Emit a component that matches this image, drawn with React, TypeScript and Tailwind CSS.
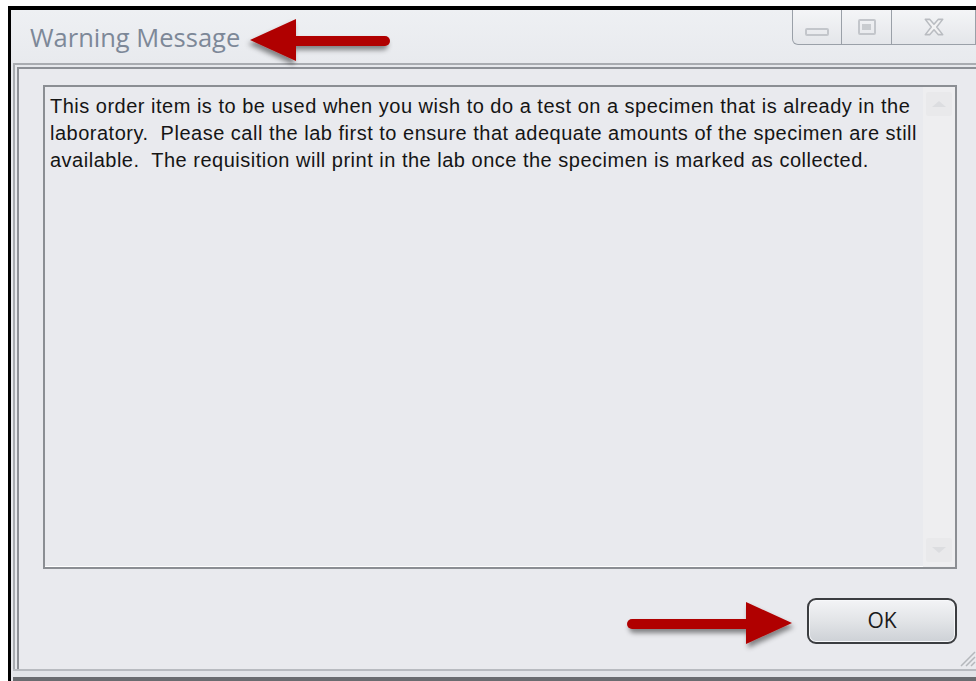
import React from "react";

const LINES = [
  "This order item is to be used when you wish to do a test on a specimen that is already in the",
  "laboratory.\u00a0 Please call the lab first to ensure that adequate amounts of the specimen are still",
  "available.\u00a0 The requisition will print in the lab once the specimen is marked as collected.",
];

function CalloutArrow({ dir, length }: { dir: "left" | "right"; length: number }) {
  // drawn pointing right, mirrored for the left one
  const w = length + 12;
  return (
    <svg width={w} height="60" viewBox={`0 0 ${w} 60`} className="overflow-visible">
      <defs>
        <filter id={`sh-${dir}`} x="-20%" y="-40%" width="140%" height="180%">
          <feDropShadow dx="2" dy="4" stdDeviation="2.5" floodColor="#000" floodOpacity="0.45" />
        </filter>
      </defs>
      <g filter={`url(#sh-${dir})`} transform={dir === "left" ? `translate(${w} 0) scale(-1 1)` : undefined}>
        <line x1="6" y1="32" x2={length - 40} y2="32" stroke="#b00000" strokeWidth="10" strokeLinecap="round" />
        <polygon points={`${length - 46},10 ${length},31 ${length - 46},52`} fill="#b00000" />
      </g>
    </svg>
  );
}

function CaptionButton({ kind, className }: { kind: "min" | "max" | "close"; className: string }) {
  return (
    <div
      className={`flex items-center justify-center h-[35px] border border-t-0 border-[#9aa0a8] bg-gradient-to-b from-[#f4f5f7] to-[#e4e6ea] ${className}`}
    >
      {kind === "min" && <div className="mt-[10px] h-[8px] w-[24px] rounded-[2px] border-2 border-[#c3c6cb]" />}
      {kind === "max" && (
        <div className="flex h-[16px] w-[18px] items-center justify-center rounded-[2px] border-2 border-[#c3c6cb]">
          <div className="h-[6px] w-[9px] bg-[#c9ccd0]" />
        </div>
      )}
      {kind === "close" && (
        <svg width="24" height="18" viewBox="0 0 22 16">
          <path
            d="M3 1h4l4 4.5L15 1h4l-5.5 7L19 15h-4l-4-4.5L7 15H3l5.5-7z"
            fill="#f2f2f3"
            stroke="#b9bcc1"
            strokeWidth="1.4"
            strokeLinejoin="round"
          />
        </svg>
      )}
    </div>
  );
}

export default function App() {
  return (
    <div className="relative h-[681px] w-[976px] overflow-hidden bg-white">
      <div className="ml-[8px] mt-[6px] flex h-[675px] flex-col border-l-[3px] border-t-[4px] border-black bg-[#e6e8ec]">
        {/* title bar */}
        <div className="relative flex h-[53px] shrink-0 items-start bg-gradient-to-b from-[#eef0f3] to-[#e8eaee]">
          <span
            className="ml-[19px] mt-[15px] text-[25.5px] leading-none text-[#7d8898]"
            style={{ fontFamily: '"Segoe UI", "Open Sans", sans-serif' }}
          >
            Warning Message
          </span>
          <div className="ml-auto flex">
            <CaptionButton kind="min" className="w-[50px] rounded-bl-[6px]" />
            <CaptionButton kind="max" className="w-[50px] border-l-0" />
            <CaptionButton kind="close" className="w-[84px] border-l-0 border-[#7c828a]" />
          </div>
        </div>

        {/* client frame */}
        <div className="flex flex-1 flex-col pl-[2px]">
          <div className="flex flex-1 flex-col border-l-2 border-t-2 border-[#a9acb1] pl-[2px] pt-[2px]">
            <div className="relative flex flex-1 flex-col border-l-2 border-t-2 border-[#8d9096] bg-[#e9eaee] pl-[24px] pr-[19px] pt-[16px]">
              {/* message box */}
              <div className="flex h-[484px] border-2 border-[#8b8e93] shadow-[inset_-1px_-1px_0_#fff]">
                <div
                  className="flex-1 pl-[5px] pt-[6px] text-[20px] leading-[27px] tracking-[0.5px] text-[#151515]"
                  style={{ fontFamily: '"Liberation Sans", Arial, sans-serif' }}
                >
                  {LINES.map((l) => (
                    <div key={l} className="whitespace-pre">
                      {l}
                    </div>
                  ))}
                </div>
                <div className="flex w-[32px] flex-col justify-between bg-[#eeeef0] px-[3px] py-[5px]">
                  <div className="flex h-[24px] items-center justify-center rounded-[2px] bg-[#e9e9eb]">
                    <div className="h-0 w-0 border-x-[7px] border-b-[6px] border-x-transparent border-b-[#dcdde0]" />
                  </div>
                  <div className="flex h-[24px] items-center justify-center rounded-[2px] bg-[#e9e9eb]">
                    <div className="h-0 w-0 border-x-[7px] border-t-[6px] border-x-transparent border-t-[#dcdde0]" />
                  </div>
                </div>
              </div>

              {/* button row */}
              <div className="flex justify-end pt-[29px]">
                <button
                  className="flex h-[46px] w-[150px] items-center justify-center rounded-[9px] border-2 border-[#3b3d40] bg-gradient-to-b from-[#f3f4f6] via-[#e2e4e7] to-[#cdd1d6] text-[21px] text-[#1a1a1a] shadow-[inset_0_0_0_1px_#f7f8fa]"
                  style={{ fontFamily: '"Segoe UI", "Open Sans", sans-serif' }}
                >
                  OK
                </button>
              </div>

              {/* resize grip */}
              <svg className="absolute bottom-[2px] right-0" width="18" height="18" viewBox="0 0 18 18">
                <path d="M17 3L3 17M17 8L8 17M17 13L13 17" stroke="#b5b8bc" strokeWidth="1.5" />
              </svg>
            </div>
          </div>
          {/* bottom frame */}
          <div className="h-[8px] shrink-0 border-t-2 border-[#b8bbc0] bg-[#e2e4e8]" />
          <div className="h-[4px] shrink-0 bg-[#6a6c70]" />
        </div>
      </div>

      {/* callouts */}
      <div className="absolute left-[238px] top-[9px]">
        <CalloutArrow dir="left" length={141} />
      </div>
      <div className="absolute left-[626px] top-[592px]">
        <CalloutArrow dir="right" length={166} />
      </div>
    </div>
  );
}
